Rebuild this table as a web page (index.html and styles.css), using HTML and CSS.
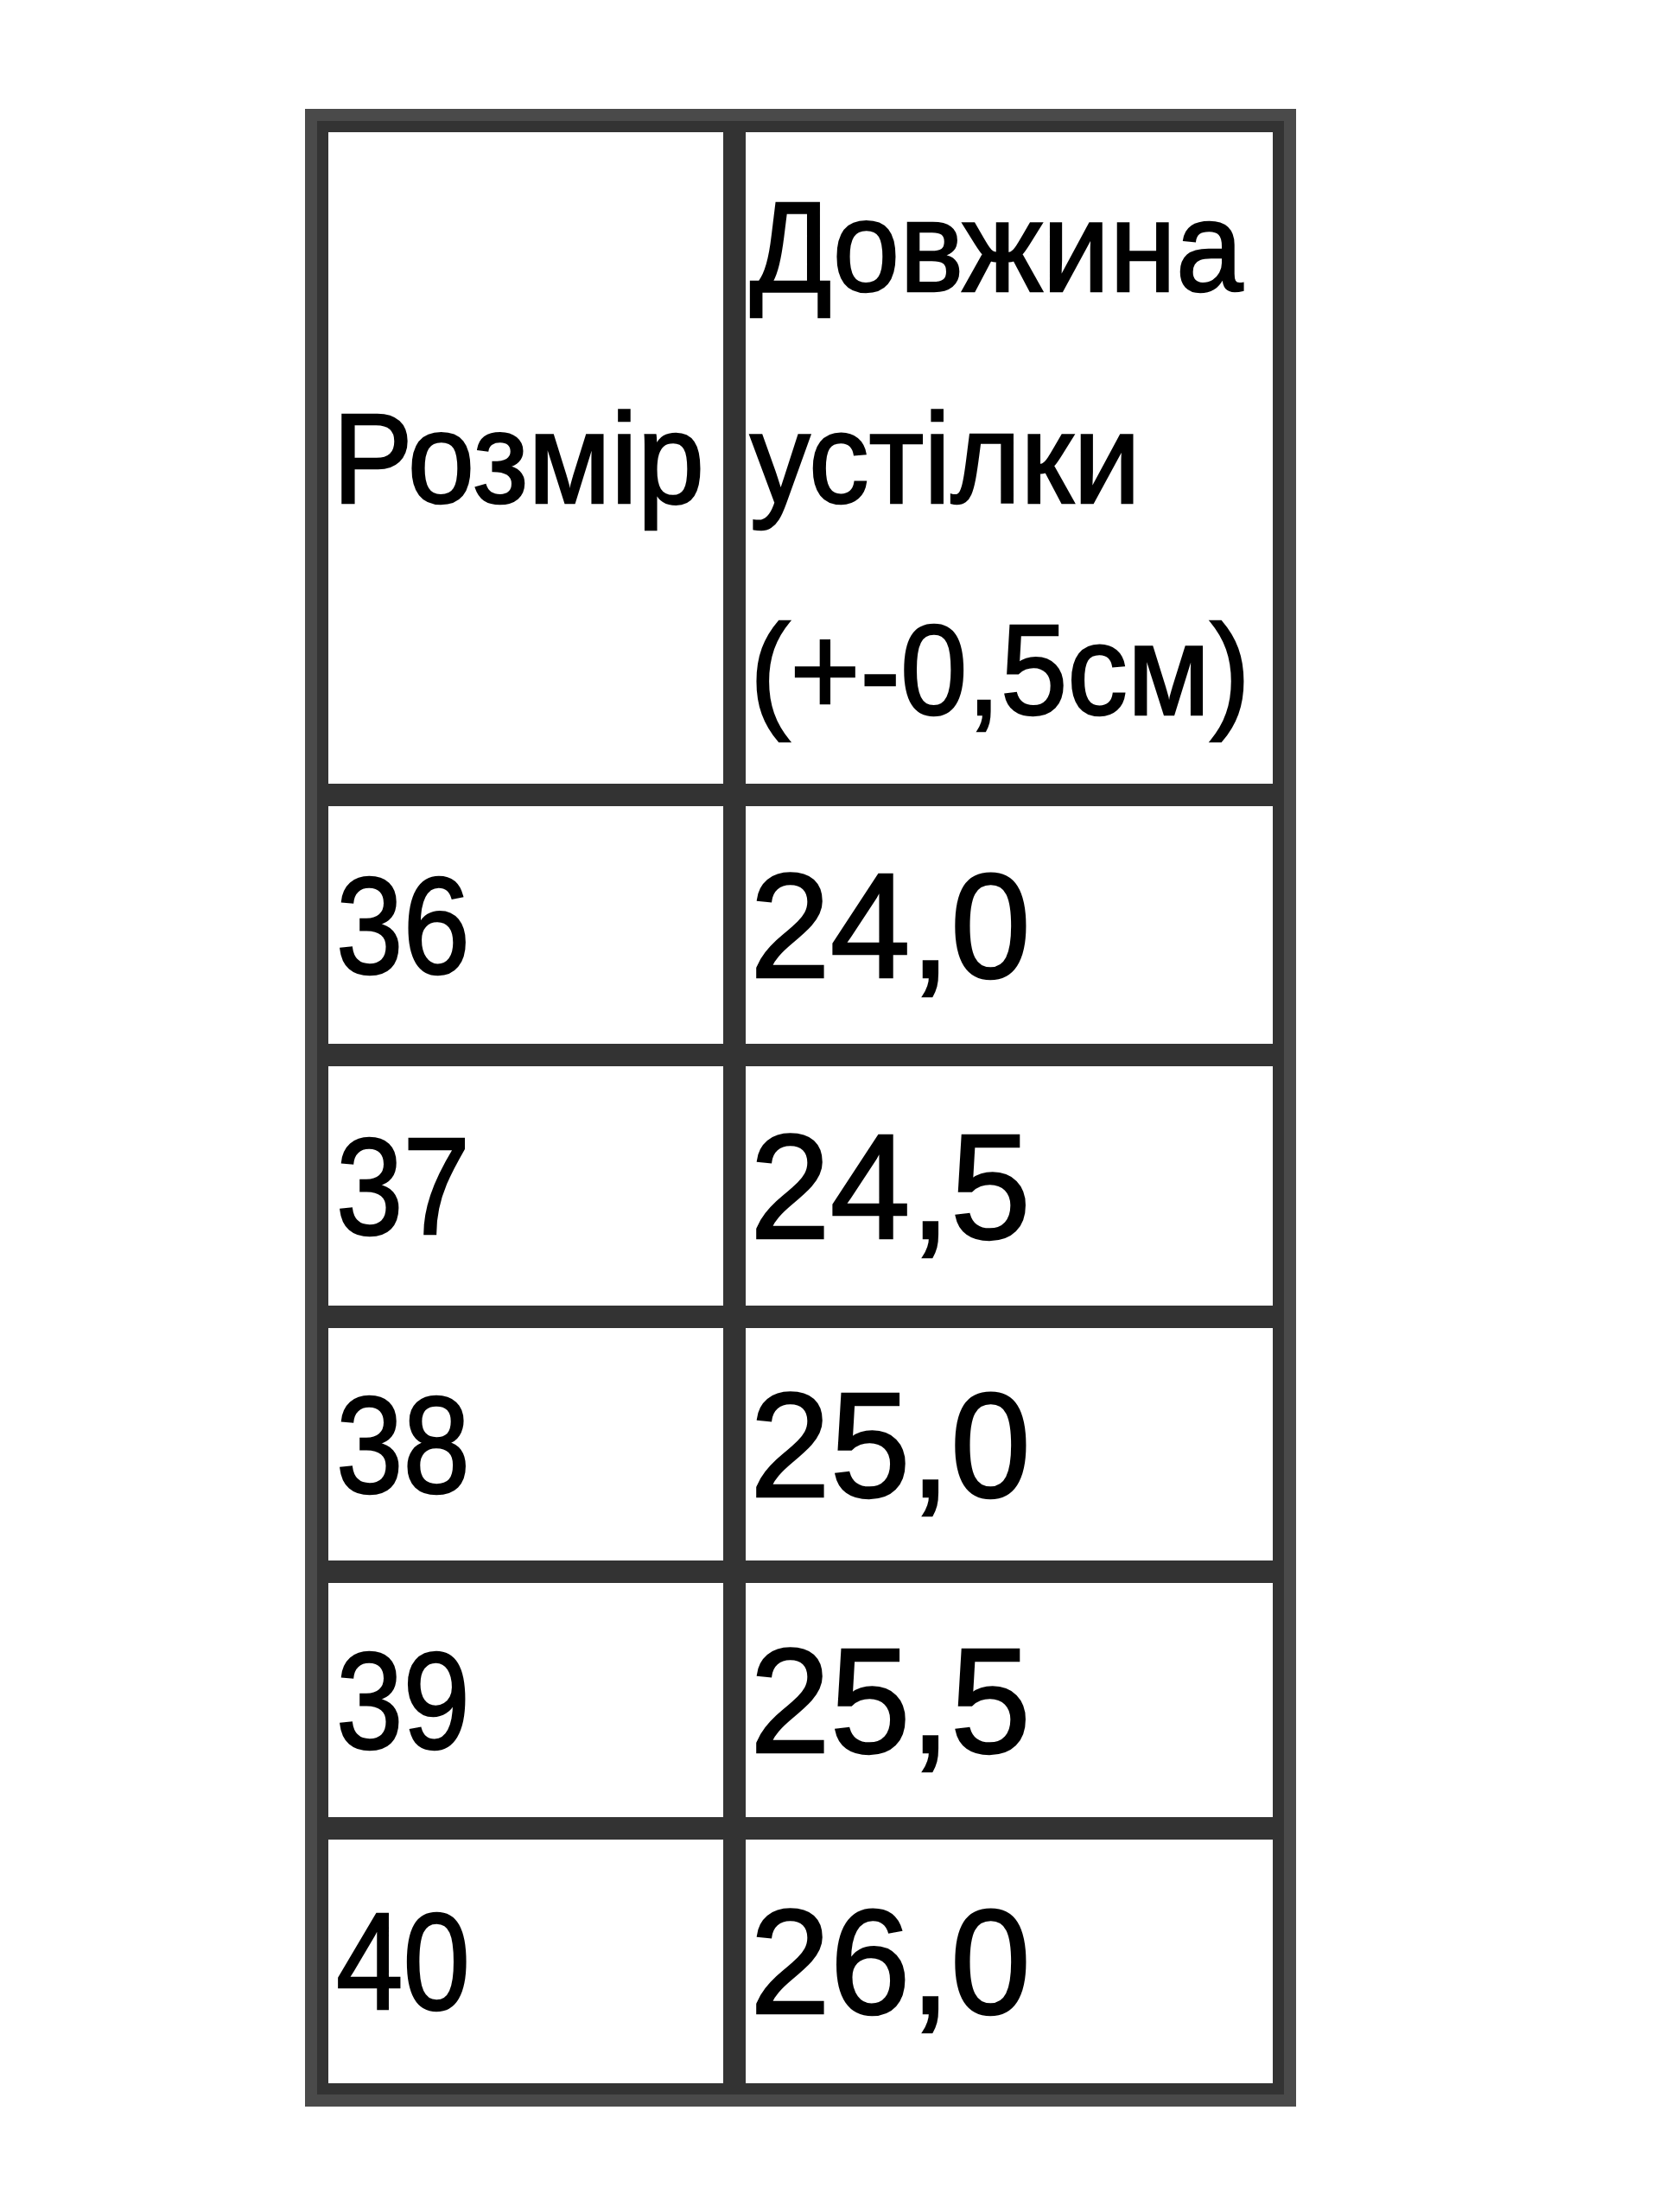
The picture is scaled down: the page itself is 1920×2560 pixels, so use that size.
FILE: index.html
```html
<!DOCTYPE html>
<html lang="uk">
<head>
<meta charset="utf-8">
<title>Таблиця розмірів</title>
<link rel="stylesheet" href="styles.css">
</head>
<body>
<div class="page">
  <table class="size-table">
    <tbody>
      <tr class="head-row">
        <td class="col-size"><span class="txt head">Розмір</span></td>
        <td class="col-len"><span class="txt head">Довжина<br>устілки<br>(+-0,5см)</span></td>
      </tr>
      <tr class="row r1">
        <td class="col-size"><span class="txt num">36</span></td>
        <td class="col-len"><span class="txt val">24,0</span></td>
      </tr>
      <tr class="row r2">
        <td class="col-size"><span class="txt num">37</span></td>
        <td class="col-len"><span class="txt val">24,5</span></td>
      </tr>
      <tr class="row r3">
        <td class="col-size"><span class="txt num">38</span></td>
        <td class="col-len"><span class="txt val">25,0</span></td>
      </tr>
      <tr class="row r4">
        <td class="col-size"><span class="txt num">39</span></td>
        <td class="col-len"><span class="txt val">25,5</span></td>
      </tr>
      <tr class="row r5">
        <td class="col-size"><span class="txt num">40</span></td>
        <td class="col-len"><span class="txt val">26,0</span></td>
      </tr>
    </tbody>
  </table>
</div>
</body>
</html>
```
FILE: styles.css
```css
html, body {
  margin: 0;
  padding: 0;
  background: #ffffff;
}

.page {
  padding: 126px 0 0 353px;
  font-family: "Liberation Sans", Arial, sans-serif;
  color: #000000;
}

.size-table {
  border-collapse: separate;
  border-spacing: 0;
  table-layout: fixed;
  width: 1147px;
  box-sizing: border-box;
  border: 14px solid #4a4a4a;
}

.size-table td {
  box-sizing: border-box;
  border: 13px solid #333333;
  padding: 0 0 0 5px;
  vertical-align: middle;
  text-align: left;
  white-space: nowrap;
}

.col-size {
  width: 483px;
}

.col-len {
  width: 636px;
}

.head-row td {
  height: 780px;
}

.r1 td { height: 301px; }
.r2 td { height: 303px; }
.r3 td { height: 295px; }
.r4 td { height: 297px; }
.r5 td { height: 308px; }

.txt {
  display: inline-block;
  transform-origin: left center;
  -webkit-text-stroke: 2.5px #000000;
}

.head {
  font-size: 148px;
  line-height: 245px;
  transform: scaleX(0.94);
}

.num {
  font-size: 160px;
  line-height: 180px;
  margin-left: 4px;
  transform: scaleX(0.87);
}

.val {
  font-size: 172px;
  line-height: 190px;
  transform: scaleX(0.97);
}
```
